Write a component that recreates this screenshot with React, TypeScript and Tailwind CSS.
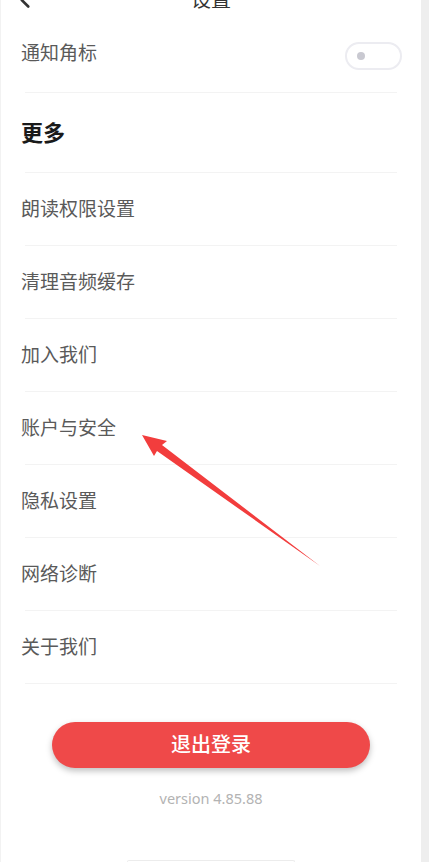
import { ChevronLeft } from "lucide-react";

const items = ["朗读权限设置", "清理音频缓存", "加入我们", "账户与安全", "隐私设置", "网络诊断", "关于我们"];

function Row({ label }: { label: string }) {
    return (
        <div className="mx-[24px] h-[73px] flex items-center border-b border-[#f3f3f3]">
            <span className="-ml-[4px] text-[19px] text-[#5a5a5a]">{label}</span>
        </div>
    );
}

export default function App() {
    return (
        <div
            className="relative w-[429px] h-[862px] overflow-hidden bg-[#eeeeee]"
            style={{ fontFamily: '"Noto Sans", "Noto Sans CJK SC", sans-serif' }}
        >
            <div className="w-[421px] h-full bg-white border-l border-[#f2f2f2] flex flex-col">
                {/* Header (scrolled partly off screen) */}
                <div className="-mt-[14px] h-[28px] relative flex items-center justify-center">
                    <ChevronLeft size={26} strokeWidth={2.4} className="absolute left-[11px] text-[#333]" />
                    <span className="text-[20px] text-[#333]">设置</span>
                </div>

                {/* 通知角标 */}
                <div className="mx-[24px] h-[79px] flex items-center justify-between border-b border-[#f3f3f3]">
                    <span className="-ml-[4px] text-[19px] text-[#5a5a5a]">通知角标</span>
                    <div className="mt-[6px] -mr-[5px] w-[57px] h-[28px] rounded-full border-2 border-[#ececf1] flex items-center pl-[10px]">
                        <div className="w-[8px] h-[8px] rounded-full bg-[#c9c9d1]" />
                    </div>
                </div>

                {/* 更多 */}
                <div className="mx-[24px] h-[80px] flex items-center border-b border-[#f3f3f3]">
                    <span className="-ml-[4px] text-[22px] font-bold text-[#1a1a1a]">更多</span>
                </div>

                {items.map((label) => (
                    <Row key={label} label={label} />
                ))}

                <div className="mt-[38px] flex justify-center">
                    <button className="w-[318px] h-[46px] rounded-full bg-[#ef4949] text-white text-[20px] font-medium shadow-[0_3px_6px_rgba(0,0,0,0.25)]">
                        退出登录
                    </button>
                </div>

                <div className="mt-[20px] text-center text-[14.5px] text-[#b3b3b3]">version 4.85.88</div>

                <div className="mt-auto mx-auto w-[168px] h-[2px] border-t border-x border-[#ececec] rounded-t-[3px]" />
            </div>

            {/* annotation arrow */}
            <svg className="absolute left-0 top-0 pointer-events-none" width="429" height="862">
                <polygon points="142,435 167,441 162,445 320,566 157,451 154,456" fill="#f23d3d" />
            </svg>
        </div>
    );
}
